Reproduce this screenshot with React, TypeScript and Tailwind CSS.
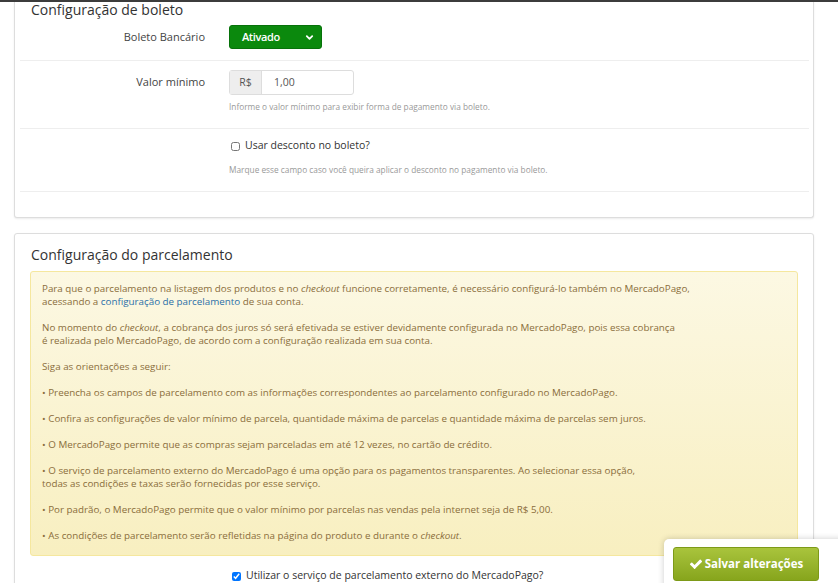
import React from "react";

const CheckIcon: React.FC<{ className?: string }> = ({ className }) => (
	<svg viewBox="0 0 1792 1792" className={className} fill="currentColor">
		<path d="M1671 566q0 40-28 68l-724 724-136 136q-28 28-68 28t-68-28l-136-136-362-362q-28-28-28-68t28-68l136-136q28-28 68-28t68 28l294 295 656-657q28-28 68-28t68 28l136 136q28 28 28 68z" />
	</svg>
);

const Chevron: React.FC = () => (
	<svg viewBox="0 0 10 10" className="w-[9px] h-[9px]" fill="none" stroke="white" strokeWidth="2" strokeLinecap="round" strokeLinejoin="round">
		<path d="M2 3.5l3 3 3-3" />
	</svg>
);

const App: React.FC = () => {
	return (
		<div className="relative h-[583px] w-[838px] overflow-hidden bg-white font-['Open_Sans',sans-serif] text-[#333]">
			{/* top bar */}
			<div className="relative z-10 h-[2px] bg-[#3c3c3c]" />

			{/* Card: boleto */}
			<div className="ml-[14px] w-[800px] rounded-b-[3px] border border-t-0 border-[#ddd] bg-white shadow-[0_1px_2px_rgba(0,0,0,0.08)]">
				<h3 className="-mt-[1px] pl-[16px] text-[14px] leading-[18px] font-normal">Configuração de boleto</h3>

				<div className="mx-[5px] mr-[4px]">
					{/* Boleto Bancário */}
					<div className="grid grid-cols-[185px_1fr] gap-x-[24px] border-b border-[#eee] pt-[6px] pb-[11px]">
						<div className="flex h-[24px] items-center justify-end text-[11px] text-[#444]">Boleto Bancário</div>
						<div>
							<div className="flex h-[24px] w-[93px] items-center justify-between rounded-[3px] border border-[#07720a] bg-[#0b890d] pl-[12px] pr-[7px] text-[11px] font-semibold tracking-[-0.4px] text-white">
								<span>Ativado</span>
								<Chevron />
							</div>
						</div>
					</div>

					{/* Valor mínimo */}
					<div className="grid grid-cols-[185px_1fr] gap-x-[24px] border-b border-[#eee] pt-[9px] pb-[16px]">
						<div className="flex h-[25px] items-center justify-end text-[11px] text-[#444]">Valor mínimo</div>
						<div>
							<div className="flex h-[25px] w-[125px] rounded-[3px] border border-[#ddd] text-[10.5px] text-[#555]">
								<div className="flex w-[32px] items-center justify-center border-r border-[#ddd] bg-[#eee]">R$</div>
								<div className="flex items-center pl-[12px]">1,00</div>
							</div>
							<p className="mt-[6px] text-[8.3px] leading-[11px] text-[#999]">
								Informe o valor mínimo para exibir forma de pagamento via boleto.
							</p>
						</div>
					</div>

					{/* Desconto */}
					<div className="grid grid-cols-[185px_1fr] gap-x-[24px] border-b border-[#eee] pt-[10px] pb-[16px]">
						<div />
						<div>
							<label className="flex h-[14px] items-center gap-[5px] pl-[2px] text-[10.5px] text-[#333]">
								<input type="checkbox" className="m-0 h-[9px] w-[9px]" />
								Usar desconto no boleto?
							</label>
							<p className="mt-[11px] text-[8.3px] leading-[11px] text-[#999]">
								Marque esse campo caso você queira aplicar o desconto no pagamento via boleto.
							</p>
						</div>
					</div>
				</div>
				<div className="h-[25px]" />
			</div>

			{/* Card: parcelamento */}
			<div className="mt-[15px] ml-[14px] w-[800px] rounded-[3px] border border-[#ddd] bg-white pt-[12px] pb-[20px] shadow-[0_1px_2px_rgba(0,0,0,0.08)]">
				<h3 className="pl-[16px] text-[14px] leading-[18px] font-normal">Configuração do parcelamento</h3>

				<div className="mx-[15px] mt-[7px] rounded-[3px] border border-[#f5e79e] bg-gradient-to-b from-[#fcf8e3] to-[#f8efc0] pt-[10px] pr-[10px] pb-[13px] pl-[11px] text-[9.8px] leading-[13px] text-[#8a6d3b]">
					<p>
						Para que o parcelamento na listagem dos produtos e no <em>checkout</em> funcione corretamente, é necessário configurá-lo também no MercadoPago,
						<br />
						acessando a <span className="text-[#2a6fa8]">configuração de parcelamento</span> de sua conta.
					</p>
					<p className="mt-[13px]">
						No momento do <em>checkout</em>, a cobrança dos juros só será efetivada se estiver devidamente configurada no MercadoPago, pois essa cobrança
						<br />
						é realizada pelo MercadoPago, de acordo com a configuração realizada em sua conta.
					</p>
					<p className="mt-[13px]">Siga as orientações a seguir:</p>
					<p className="mt-[13px]">• Preencha os campos de parcelamento com as informações correspondentes ao parcelamento configurado no MercadoPago.</p>
					<p className="mt-[13px]">• Confira as configurações de valor mínimo de parcela, quantidade máxima de parcelas e quantidade máxima de parcelas sem juros.</p>
					<p className="mt-[13px]">• O MercadoPago permite que as compras sejam parceladas em até 12 vezes, no cartão de crédito.</p>
					<p className="mt-[13px]">
						• O serviço de parcelamento externo do MercadoPago é uma opção para os pagamentos transparentes. Ao selecionar essa opção,
						<br />
						todas as condições e taxas serão fornecidas por esse serviço.
					</p>
					<p className="mt-[13px]">• Por padrão, o MercadoPago permite que o valor mínimo por parcelas nas vendas pela internet seja de R$ 5,00.</p>
					<p className="mt-[13px]">
						• As condições de parcelamento serão refletidas na página do produto e durante o <em>checkout</em>.
					</p>
				</div>

				<div className="mt-[13px] grid grid-cols-[200px_1fr] gap-x-[15px]">
					<div />
					<label className="flex h-[14px] items-center gap-[5px] pl-[2px] text-[10.5px] text-[#333]">
						<input type="checkbox" defaultChecked className="m-0 h-[9px] w-[9px]" />
						Utilizar o serviço de parcelamento externo do MercadoPago?
					</label>
				</div>
			</div>

			{/* floating save bar */}
			<div className="absolute top-[539px] left-[664px] h-[60px] w-[190px] rounded-[5px] bg-white pt-[8px] pl-[9px] shadow-[0_0_6px_rgba(0,0,0,0.2)]">
				<button className="flex h-[34px] w-[146px] items-center justify-center gap-[2px] rounded-[3px] border border-[#7d9a18] bg-gradient-to-b from-[#a9c43c] to-[#87a51c] text-[11.5px] font-bold text-white">
					<CheckIcon className="h-[14px] w-[14px]" />
					Salvar alterações
				</button>
			</div>
		</div>
	);
};

export default App;
